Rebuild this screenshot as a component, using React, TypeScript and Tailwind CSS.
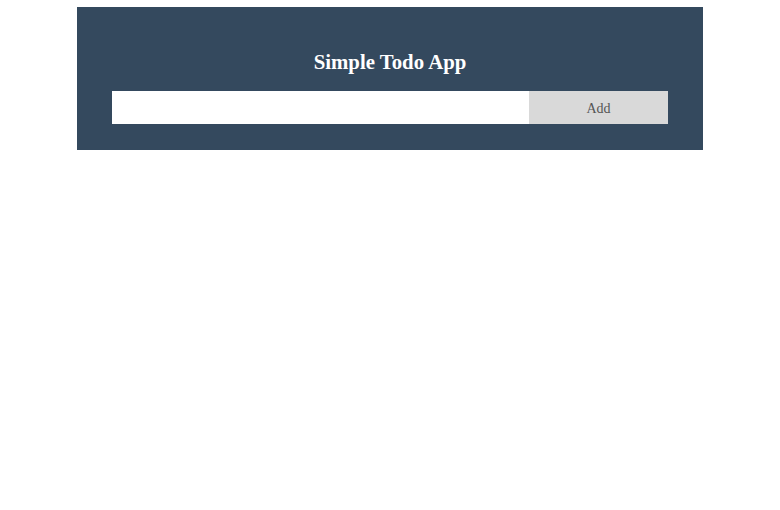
import React, { useState } from "react";

export default function App() {
  const [value, setValue] = useState("");
  return (
    <div className="w-full min-h-[510px] bg-white pt-[7px]" style={{ fontFamily: '"Liberation Serif", "Times New Roman", serif' }}>
      <div className="mx-auto w-[626px] bg-[#34495e] px-[35px] pt-[43px] pb-[26px]">
        <h2 className="text-center text-[20.8px] leading-[24px] font-bold text-white">Simple Todo App</h2>
        <div className="mt-[17px] flex h-[33px]">
          <input
            className="w-3/4 h-full bg-white border-0 outline-none px-2 text-[14px]"
            value={value}
            onChange={(e) => setValue(e.target.value)}
          />
          <button className="w-1/4 h-full bg-[#d9d9d9] text-[#555555] text-[14px] pt-[1px]">Add</button>
        </div>
      </div>
    </div>
  );
}
